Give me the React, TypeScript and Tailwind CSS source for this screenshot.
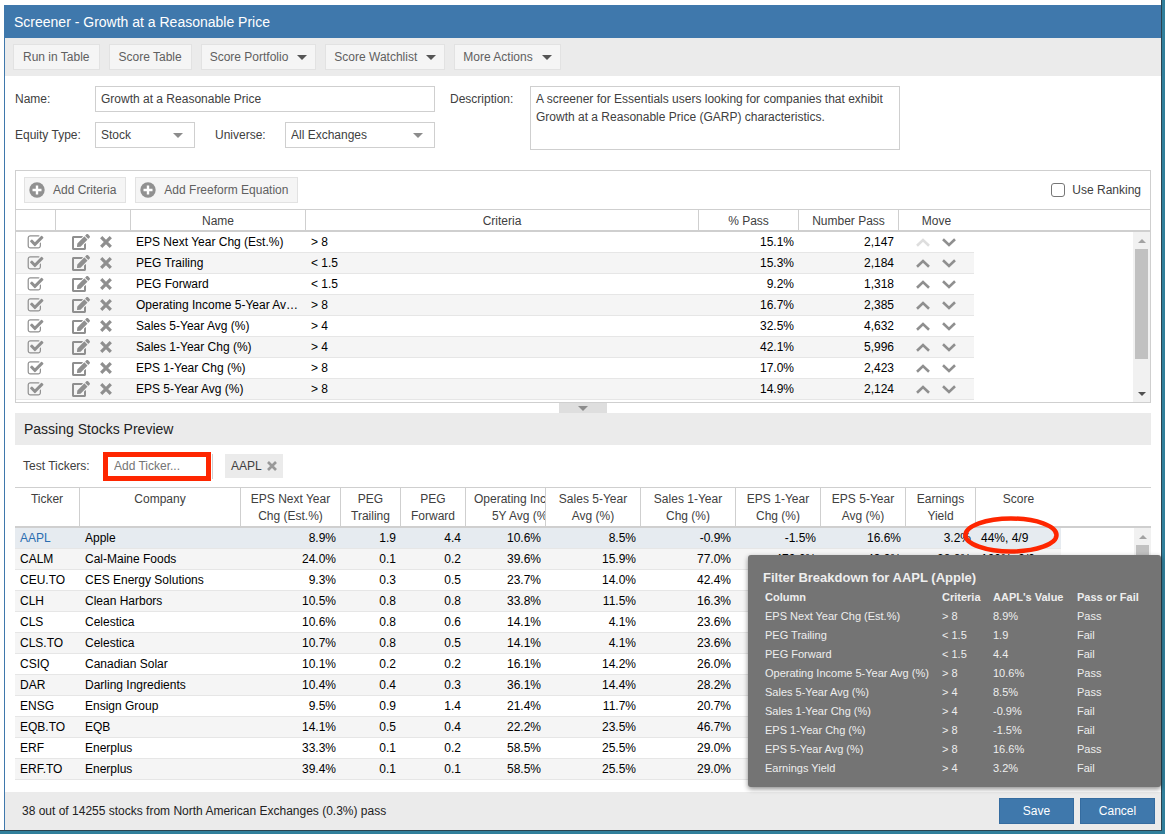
import { ReactNode } from "react";
import { FaEdit } from "react-icons/fa";

interface Criterion {
  name: string;
  rule: string;
  pass: string;
  count: string;
}

interface Stock {
  ticker: string;
  company: string;
  values: string[];
}

const criteria: Criterion[] = [
  { name: "EPS Next Year Chg (Est.%)", rule: "> 8", pass: "15.1%", count: "2,147" },
  { name: "PEG Trailing", rule: "< 1.5", pass: "15.3%", count: "2,184" },
  { name: "PEG Forward", rule: "< 1.5", pass: "9.2%", count: "1,318" },
  { name: "Operating Income 5-Year Avg (%)", rule: "> 8", pass: "16.7%", count: "2,385" },
  { name: "Sales 5-Year Avg (%)", rule: "> 4", pass: "32.5%", count: "4,632" },
  { name: "Sales 1-Year Chg (%)", rule: "> 4", pass: "42.1%", count: "5,996" },
  { name: "EPS 1-Year Chg (%)", rule: "> 8", pass: "17.0%", count: "2,423" },
  { name: "EPS 5-Year Avg (%)", rule: "> 8", pass: "14.9%", count: "2,124" },
];

const stocks: Stock[] = [
  {
    ticker: "AAPL",
    company: "Apple",
    values: ["8.9%", "1.9", "4.4", "10.6%", "8.5%", "-0.9%", "-1.5%", "16.6%", "3.2%", "44%, 4/9"],
  },
  {
    ticker: "CALM",
    company: "Cal-Maine Foods",
    values: ["24.0%", "0.1", "0.2", "39.6%", "15.9%", "77.0%", "470.6%", "43.9%", "28.8%", "100%, 9/9"],
  },
  { ticker: "CEU.TO", company: "CES Energy Solutions", values: ["9.3%", "0.3", "0.5", "23.7%", "14.0%", "42.4%"] },
  { ticker: "CLH", company: "Clean Harbors", values: ["10.5%", "0.8", "0.8", "33.8%", "11.5%", "16.3%"] },
  { ticker: "CLS", company: "Celestica", values: ["10.6%", "0.8", "0.6", "14.1%", "4.1%", "23.6%"] },
  { ticker: "CLS.TO", company: "Celestica", values: ["10.7%", "0.8", "0.5", "14.1%", "4.1%", "23.6%"] },
  { ticker: "CSIQ", company: "Canadian Solar", values: ["10.1%", "0.2", "0.2", "16.1%", "14.2%", "26.0%"] },
  { ticker: "DAR", company: "Darling Ingredients", values: ["10.4%", "0.4", "0.3", "36.1%", "14.4%", "28.2%"] },
  { ticker: "ENSG", company: "Ensign Group", values: ["9.5%", "0.9", "1.4", "21.4%", "11.7%", "20.7%"] },
  { ticker: "EQB.TO", company: "EQB", values: ["14.1%", "0.5", "0.4", "22.2%", "23.5%", "46.7%"] },
  { ticker: "ERF", company: "Enerplus", values: ["33.3%", "0.1", "0.2", "58.5%", "25.5%", "29.0%"] },
  { ticker: "ERF.TO", company: "Enerplus", values: ["39.4%", "0.1", "0.1", "58.5%", "25.5%", "29.0%"] },
];

const breakdown = [
  ["EPS Next Year Chg (Est.%)", "> 8", "8.9%", "Pass"],
  ["PEG Trailing", "< 1.5", "1.9", "Fail"],
  ["PEG Forward", "< 1.5", "4.4", "Fail"],
  ["Operating Income 5-Year Avg (%)", "> 8", "10.6%", "Pass"],
  ["Sales 5-Year Avg (%)", "> 4", "8.5%", "Pass"],
  ["Sales 1-Year Chg (%)", "> 4", "-0.9%", "Fail"],
  ["EPS 1-Year Chg (%)", "> 8", "-1.5%", "Fail"],
  ["EPS 5-Year Avg (%)", "> 8", "16.6%", "Pass"],
  ["Earnings Yield", "> 4", "3.2%", "Fail"],
];

const stockColumns = [
  { lines: ["Ticker"], width: "w-[65px]" },
  { lines: ["Company"], width: "w-[161px]" },
  { lines: ["EPS Next Year", "Chg (Est.%)"], width: "w-[100px]" },
  { lines: ["PEG", "Trailing"], width: "w-[60px]" },
  { lines: ["PEG", "Forward"], width: "w-[65px]" },
  { lines: ["Operating Income", "5Y Avg (%)"], width: "w-[80px]" },
  { lines: ["Sales 5-Year", "Avg (%)"], width: "w-[95px]" },
  { lines: ["Sales 1-Year", "Chg (%)"], width: "w-[95px]" },
  { lines: ["EPS 1-Year", "Chg (%)"], width: "w-[85px]" },
  { lines: ["EPS 5-Year", "Avg (%)"], width: "w-[85px]" },
  { lines: ["Earnings", "Yield"], width: "w-[70px]" },
  { lines: ["Score"], width: "w-[85px]" },
];

function Caret({ className }: { className: string }) {
  return (
    <svg viewBox="0 0 10 5" className={`h-[5px] w-[10px] ${className}`} aria-hidden="true">
      <path d="M0 0h10L5 5z" fill="currentColor" />
    </svg>
  );
}

function PlusCircleIcon() {
  return (
    <svg viewBox="0 0 16 16" className="size-4 text-[#919191]" aria-hidden="true">
      <circle cx="8" cy="8" r="7.7" fill="currentColor" />
      <path d="M8 3.5v9M3.5 8h9" stroke="#fff" strokeWidth="2.4" />
    </svg>
  );
}

function CheckIcon() {
  return (
    <svg viewBox="0 0 1792 1792" className="size-[17px]" fill="currentColor" aria-hidden="true">
      <path d="M1472 930v318q0 119-84.5 203.5t-203.5 84.5h-832q-119 0-203.5-84.5t-84.5-203.5v-832q0-119 84.5-203.5t203.5-84.5h832q63 0 117 25 15 7 18 23 3 17-9 29l-49 49q-10 10-23 10-3 0-9-2-23-6-45-6h-832q-66 0-113 47t-47 113v832q0 66 47 113t113 47h832q66 0 113-47t47-113v-254q0-13 9-22l64-64q10-10 23-10 6 0 12 3 20 8 20 29zm231-489l-814 814q-24 24-57 24t-57-24l-430-430q-24-24-24-57t24-57l110-110q24-24 57-24t57 24l263 263 647-647q24-24 57-24t57 24l110 110q24 24 24 57t-24 57z" />
    </svg>
  );
}

function CrossIcon({ className }: { className: string }) {
  return (
    <svg viewBox="0 0 12 12" className={className} aria-hidden="true">
      <path d="M1.2 1.2l9.6 9.6M10.8 1.2l-9.6 9.6" stroke="currentColor" strokeWidth="3.2" />
    </svg>
  );
}

function Chevron({ down = false }: { down?: boolean }) {
  return (
    <svg viewBox="0 0 14 9" className="h-[9px] w-[14px]" aria-hidden="true">
      <path
        d={down ? "M1 1.3l6 5.7 6-5.7" : "M1 7.7l6-5.7 6 5.7"}
        fill="none"
        stroke="currentColor"
        strokeWidth="2.6"
      />
    </svg>
  );
}

function ToolButton({ children, menu = false }: { children: ReactNode; menu?: boolean }) {
  return (
    <button
      className={`flex h-[26px] items-center gap-[9px] border border-[#e2e2e2] bg-[#f5f5f5] text-[#606060] ${menu ? "px-2" : "px-[9px]"}`}
    >
      {children}
      {menu && <Caret className="text-[#555]" />}
    </button>
  );
}

function SelectBox({ id, value, className }: { id: string; value: string; className: string }) {
  return (
    <div className={`relative ${className}`}>
      <select
        id={id}
        className="h-[26px] w-full appearance-none border border-[#cfcfcf] bg-white px-[5px] text-[#404040]"
      >
        <option>{value}</option>
      </select>
      <Caret className="pointer-events-none absolute top-[11px] right-3 text-[#8c8c8c]" />
    </div>
  );
}

function Scrollbar({ thumb, end = false }: { thumb: string; end?: boolean }) {
  return (
    <div className="flex w-[17px] flex-col items-center bg-[#f1f1f1]">
      <div className="flex h-[17px] items-center">
        <svg viewBox="0 0 8 4" className="h-1 w-2 text-[#a3a3a3]" aria-hidden="true">
          <path d="M0 4h8L4 0z" fill="currentColor" />
        </svg>
      </div>
      <div className={`w-[13px] bg-[#c1c1c1] ${thumb}`} />
      {end && (
        <div className="mt-auto flex h-[17px] items-center">
          <svg viewBox="0 0 8 4" className="h-1 w-2 text-[#505050]" aria-hidden="true">
            <path d="M0 0h8L4 4z" fill="currentColor" />
          </svg>
        </div>
      )}
    </div>
  );
}

function CriteriaGrid() {
  const cols = (
    <colgroup>
      <col className="w-[40px]" />
      <col className="w-[75px]" />
      <col className="w-[175px]" />
      <col className="w-[393px]" />
      <col className="w-[100px]" />
      <col className="w-[100px]" />
      <col className="w-[75px]" />
    </colgroup>
  );

  return (
    <section className="border border-[#cfcfcf]">
      <div className="flex h-[38px] items-center gap-[9px] px-2">
        <button className="flex h-[26px] items-center gap-2 border border-[#e2e2e2] bg-[#f5f5f5] pr-[9px] pl-1 text-[#606060]">
          <PlusCircleIcon />
          Add Criteria
        </button>
        <button className="flex h-[26px] items-center gap-2 border border-[#e2e2e2] bg-[#f5f5f5] pr-[9px] pl-1 text-[#606060]">
          <PlusCircleIcon />
          Add Freeform Equation
        </button>
        <label className="ml-auto flex items-center gap-[7px] pr-px text-[#404040]">
          <input
            type="checkbox"
            className="size-[14px] appearance-none rounded-[3px] border border-[#767676] bg-white"
          />
          Use Ranking
        </label>
      </div>
      <div className="border-t border-b-2 border-[#cfcfcf]">
        <table className="w-[958px] table-fixed border-separate border-spacing-0 text-[#404040]">
          {cols}
          <thead>
            <tr className="h-5 *:border-[#cfcfcf] *:pt-px *:font-normal *:not-last:border-r">
              <th />
              <th />
              <th>Name</th>
              <th>Criteria</th>
              <th>% Pass</th>
              <th>Number Pass</th>
              <th>Move</th>
            </tr>
          </thead>
        </table>
      </div>
      <div className="flex h-[170px] items-stretch justify-between">
        <table className="w-[958px] table-fixed border-separate border-spacing-0 self-start text-black">
          {cols}
          <tbody>
            {criteria.map((c, i) => (
              <tr key={c.name} className="h-[21px] *:border-b *:border-[#e6e6e6] even:bg-[#f5f5f5]">
                <td>
                  <button className="flex pl-[11px] text-[#8f8f8f]" aria-label="Enabled">
                    <CheckIcon />
                  </button>
                </td>
                <td>
                  <div className="flex items-center gap-2.5 pl-4 text-[#8f8f8f]">
                    <button aria-label="Edit">
                      <FaEdit className="h-4 w-[18px]" />
                    </button>
                    <button aria-label="Remove">
                      <CrossIcon className="size-3" />
                    </button>
                  </div>
                </td>
                <td className="truncate px-[5px]">{c.name}</td>
                <td className="px-[5px]">{c.rule}</td>
                <td className="px-[5px] text-right">{c.pass}</td>
                <td className="px-[5px] text-right">{c.count}</td>
                <td>
                  <div className="flex items-center gap-3 pl-[17px] text-[#8f8f8f]">
                    <button className={i === 0 ? "text-[#dedede]" : ""} aria-label="Move up">
                      <Chevron />
                    </button>
                    <button aria-label="Move down">
                      <Chevron down />
                    </button>
                  </div>
                </td>
              </tr>
            ))}
          </tbody>
        </table>
        <Scrollbar thumb="h-[110px]" end />
      </div>
    </section>
  );
}

function StockGrid() {
  const cols = (
    <colgroup>
      {stockColumns.map((col, i) => (
        <col key={i} className={col.width} />
      ))}
    </colgroup>
  );

  return (
    <div className="border-t border-[#cfcfcf]">
      <div className="border-b-2 border-[#cfcfcf]">
        <table className="w-[1046px] table-fixed border-separate border-spacing-0 text-[#404040]">
          {cols}
          <thead>
            <tr className="h-[38px]">
              {stockColumns.map((col, i) => (
                <th
                  key={i}
                  className="overflow-hidden border-r border-[#cfcfcf] px-2 pt-[3px] align-top leading-[17px] font-normal whitespace-nowrap last:border-r-0"
                >
                  <div className="mx-auto w-max">
                    {col.lines.map((line) => (
                      <div key={line}>{line}</div>
                    ))}
                  </div>
                </th>
              ))}
            </tr>
          </thead>
        </table>
      </div>
      <div className="flex justify-between">
        <table className="w-[1046px] table-fixed border-separate border-spacing-0 text-black">
          {cols}
          <tbody>
            {stocks.map((s, i) => (
              <tr
                key={s.ticker}
                className={`h-[21px] *:border-b *:border-[#e6e6e6] ${i === 0 ? "bg-[#e6ebf0]" : "even:bg-[#f5f5f5]"}`}
              >
                <td className="px-[5px]">
                  {i === 0 ? (
                    <a href="#" className="text-[#2a6db0]">
                      {s.ticker}
                    </a>
                  ) : (
                    s.ticker
                  )}
                </td>
                <td className="truncate px-[5px]">{s.company}</td>
                {stockColumns.slice(2).map((_, v) => (
                  <td key={v} className={`px-[5px] ${v === 9 ? "" : "text-right"}`}>
                    {s.values[v]}
                  </td>
                ))}
              </tr>
            ))}
          </tbody>
        </table>
        <Scrollbar thumb="h-[110px]" />
      </div>
    </div>
  );
}

function BreakdownTooltip() {
  return (
    <div
      role="tooltip"
      className="absolute top-[68px] -right-[10px] h-[232px] w-[413px] rounded-[3px] bg-[#747474] px-[15px] pt-[13px] text-[#eee] shadow-[0_2px_5px_rgba(0,0,0,0.45)]"
    >
      <h3 className="text-[13px] leading-[20px] font-bold">Filter Breakdown for AAPL (Apple)</h3>
      <table className="ml-0.5 w-[381px] table-fixed text-left text-[11px] leading-[19px]">
        <colgroup>
          <col className="w-[177px]" />
          <col className="w-[51px]" />
          <col className="w-[84px]" />
          <col />
        </colgroup>
        <thead>
          <tr>
            <th>Column</th>
            <th>Criteria</th>
            <th>AAPL's Value</th>
            <th>Pass or Fail</th>
          </tr>
        </thead>
        <tbody>
          {breakdown.map((row) => (
            <tr key={row[0]}>
              {row.map((cell, i) => (
                <td key={i}>{cell}</td>
              ))}
            </tr>
          ))}
        </tbody>
      </table>
    </div>
  );
}

export default function App() {
  return (
    <div className="min-h-screen border-r-[3px] border-b-[3px] border-[#317f9b] bg-white font-['Liberation_Sans',Arial,sans-serif] text-[12px] leading-[18px]">
      <div className="border-r border-b border-[#2b4450] pt-[5px] pl-1">
        <main className="border-l border-[#3f78ac]">
          <h1 className="flex h-[33px] items-center bg-[#3f78ac] px-[9px] text-[14px] text-white">
            Screener - Growth at a Reasonable Price
          </h1>
          <div className="flex h-[38px] items-center gap-[9px] bg-[#ebebeb] px-2">
            <ToolButton>Run in Table</ToolButton>
            <ToolButton>Score Table</ToolButton>
            <ToolButton menu>Score Portfolio</ToolButton>
            <ToolButton menu>Score Watchlist</ToolButton>
            <ToolButton menu>More Actions</ToolButton>
          </div>

          <div className="px-[10px]">
            <form className="flex gap-[15px] pt-[10px] pb-5 text-[#404040]">
              <div className="grid grid-cols-[80px_340px] content-start gap-y-[10px]">
                <label htmlFor="name" className="leading-[26px]">
                  Name:
                </label>
                <input
                  id="name"
                  defaultValue="Growth at a Reasonable Price"
                  className="h-[26px] border border-[#cfcfcf] px-[5px]"
                />
                <label htmlFor="equity" className="leading-[26px]">
                  Equity Type:
                </label>
                <div className="flex">
                  <SelectBox id="equity" value="Stock" className="w-[100px]" />
                  <label htmlFor="universe" className="w-[90px] pl-5 leading-[26px]">
                    Universe:
                  </label>
                  <SelectBox id="universe" value="All Exchanges" className="w-[150px]" />
                </div>
              </div>
              <div className="flex">
                <label htmlFor="description" className="w-[80px] leading-[26px]">
                  Description:
                </label>
                <textarea
                  id="description"
                  className="h-[64px] w-[370px] resize-none border border-[#cfcfcf] px-[5px] pt-[3px]"
                  defaultValue="A screener for Essentials users looking for companies that exhibit Growth at a Reasonable Price (GARP) characteristics."
                />
              </div>
            </form>

            <CriteriaGrid />

            <button
              className="mx-auto flex h-[10px] w-12 items-center justify-center bg-[#dedede]"
              aria-label="Collapse"
            >
              <Caret className="text-[#8c8c8c]" />
            </button>

            <h2 className="flex h-8 items-center bg-[#ebebeb] px-[9px] text-[14px] text-[#222]">
              Passing Stocks Preview
            </h2>
            <div className="flex h-[42px] items-center px-2 text-[#404040]">
              <label htmlFor="ticker" className="w-20">
                Test Tickers:
              </label>
              <div className="border-[5px] border-[#fe2600]">
                <input
                  id="ticker"
                  placeholder="Add Ticker..."
                  className="block h-[19px] w-[98px] px-[6px] placeholder:text-[#757575]"
                />
              </div>
              <div className="ml-px h-[25px] w-px bg-[#cfcfcf]" />
              <span className="ml-3 flex h-6 items-center gap-[5px] bg-[#ebebeb] px-[6px]">
                AAPL
                <button aria-label="Remove AAPL">
                  <CrossIcon className="size-[10px] text-[#999]" />
                </button>
              </span>
            </div>

            <div className="relative">
              <StockGrid />
              {/* ring around the score of the selected row */}
              <svg
                viewBox="0 0 98 40"
                className="absolute top-[28px] right-[91px] h-10 w-[98px]"
                fill="none"
                aria-hidden="true"
              >
                <ellipse cx="49" cy="20" rx="45.5" ry="16.5" stroke="#fe2600" strokeWidth="4.5" />
              </svg>
              <BreakdownTooltip />
            </div>
          </div>

          <footer className="mt-3 flex h-[38px] items-center gap-[6px] bg-[#ebebeb] pr-[6px] pl-[17px] text-[#222]">
            <span className="mr-auto">38 out of 14255 stocks from North American Exchanges (0.3%) pass</span>
            <button className="h-[26px] w-[75px] border border-[#356ca0] bg-[#3f78ac] text-white">Save</button>
            <button className="h-[26px] w-[75px] border border-[#356ca0] bg-[#3f78ac] text-white">Cancel</button>
          </footer>
        </main>
      </div>
    </div>
  );
}
